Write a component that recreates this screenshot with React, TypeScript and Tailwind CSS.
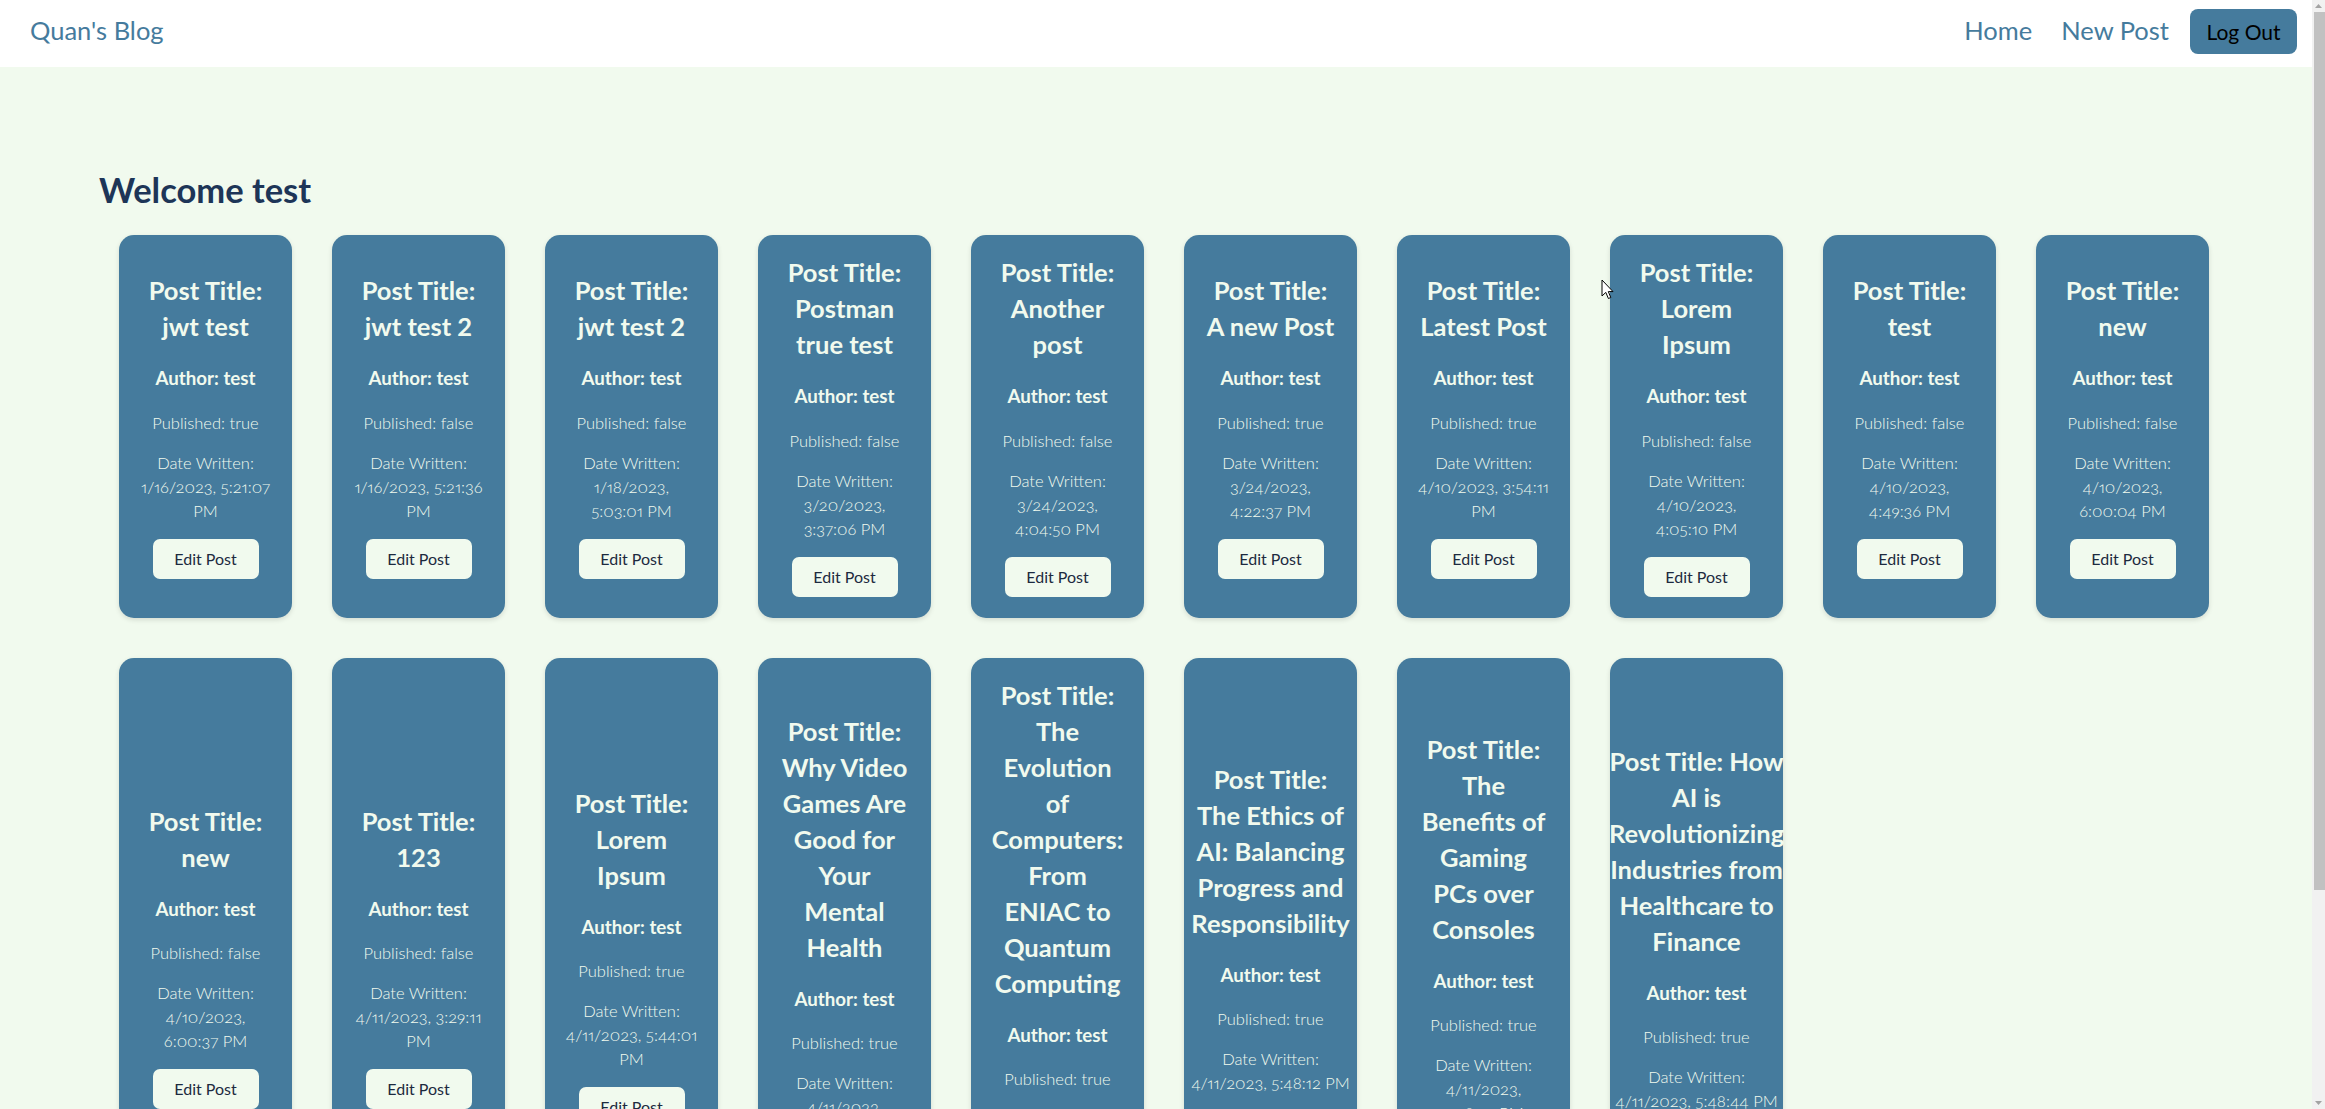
import React from "react";

type Post = { title: string; published: boolean; date: string[] };

const posts: Post[] = [
  { title: "jwt test", published: true, date: ["1/16/2023, 5:21:07", "PM"] },
  { title: "jwt test 2", published: false, date: ["1/16/2023, 5:21:36", "PM"] },
  { title: "jwt test 2", published: false, date: ["1/18/2023,", "5:03:01 PM"] },
  { title: "Postman true test", published: false, date: ["3/20/2023,", "3:37:06 PM"] },
  { title: "Another post", published: false, date: ["3/24/2023,", "4:04:50 PM"] },
  { title: "A new Post", published: true, date: ["3/24/2023,", "4:22:37 PM"] },
  { title: "Latest Post", published: true, date: ["4/10/2023, 3:54:11", "PM"] },
  { title: "Lorem Ipsum", published: false, date: ["4/10/2023,", "4:05:10 PM"] },
  { title: "test", published: false, date: ["4/10/2023,", "4:49:36 PM"] },
  { title: "new", published: false, date: ["4/10/2023,", "6:00:04 PM"] },
  { title: "new", published: false, date: ["4/10/2023,", "6:00:37 PM"] },
  { title: "123", published: false, date: ["4/11/2023, 3:29:11", "PM"] },
  { title: "Lorem Ipsum", published: true, date: ["4/11/2023, 5:44:01", "PM"] },
  { title: "Why Video Games Are Good for Your Mental Health", published: true, date: ["4/11/2023,", "5:46:21 PM"] },
  { title: "The Evolution of Computers: From ENIAC to Quantum Computing", published: true, date: ["4/11/2023,", "5:47:33 PM"] },
  { title: "The Ethics of AI: Balancing Progress and Responsibility", published: true, date: ["4/11/2023, 5:48:12 PM"] },
  { title: "The Benefits of Gaming PCs over Consoles", published: true, date: ["4/11/2023,", "5:48:27 PM"] },
  { title: "How AI is Revolutionizing Industries from Healthcare to Finance", published: true, date: ["4/11/2023, 5:48:44 PM"] },
];

function Card({ post }: { post: Post }) {
  return (
    <div className="w-[173px] rounded-[15px] bg-[#457b9d] text-[#f1faee] flex flex-col items-center justify-center px-[20px] pt-[19px] pb-[21px] shadow-[0_2px_5px_rgba(0,0,0,0.12)]">
      <div className="text-center flex flex-col items-center">
        <h2 className="text-[25.5px] leading-[36px] font-bold">Post Title: {post.title}</h2>
        <h3 className="mt-[20px] text-[18.72px] leading-[28px] font-bold whitespace-nowrap">Author: test</h3>
        <p className="mt-[18.7px] text-[16.5px] leading-[24px] font-light whitespace-nowrap">
          Published: {post.published ? "true" : "false"}
        </p>
        <p className="mt-[16px] text-[16.5px] leading-[24px] font-light oldstyle-nums proportional-nums">
          <span className="block whitespace-nowrap">Date Written:</span>
          {post.date.map((l, i) => (
            <span key={i} className="block whitespace-nowrap">
              {l}
            </span>
          ))}
        </p>
        <button className="mt-[16px] w-[106px] h-[40px] rounded-[7px] bg-[#f1faee] text-[#1d2a3f] text-[16px] leading-[24px]">
          Edit Post
        </button>
      </div>
    </div>
  );
}

function Scrollbar() {
  return (
    <div className="w-[13px] h-full bg-[#f1f1f1] flex flex-col items-stretch shrink-0">
      <div className="h-[12px] flex items-center justify-center">
        <svg width="7" height="4" viewBox="0 0 7 4">
          <path d="M0 4 L3.5 0 L7 4 Z" fill="#a3a3a3" />
        </svg>
      </div>
      <div className="ml-[2px] h-[878px] bg-[#c1c1c1]" />
      <div className="flex-1" />
      <div className="h-[12px] flex items-center justify-center">
        <svg width="7" height="4" viewBox="0 0 7 4">
          <path d="M0 0 L3.5 4 L7 0 Z" fill="#a3a3a3" />
        </svg>
      </div>
    </div>
  );
}

export default function App() {
  return (
    <div className="relative h-screen flex overflow-hidden bg-[#f1faee] font-['Lato',sans-serif]">
      <div className="flex-1 min-w-0 overflow-hidden">
        <nav className="h-[67px] bg-white flex items-center justify-between pl-[30px] pr-[15px] pb-[4px]">
          <a className="text-[25.5px] text-[#457b9d] leading-none pb-[1px]">Quan's Blog</a>
          <div className="flex items-center">
            <a className="text-[25.5px] text-[#457b9d] leading-none pb-[1px]">Home</a>
            <a className="ml-[29px] text-[25.5px] text-[#457b9d] leading-none pb-[1px]">New Post</a>
            <button className="ml-[21px] w-[107px] h-[45px] rounded-[8px] bg-[#457b9d] text-black text-[21px]">
              Log Out
            </button>
          </div>
        </nav>
        <main className="pl-[99px] pr-[60px] pt-[99px] pb-[40px]">
          <h1 className="text-[34.5px] leading-[48px] font-bold text-[#1d3557]">Welcome test</h1>
          <div className="mt-[21px] pl-[20px] flex flex-wrap gap-[40px]">
            {posts.map((p, i) => (
              <Card key={i} post={p} />
            ))}
          </div>
        </main>
      </div>
      <Scrollbar />
      <svg className="absolute left-[1601px] top-[279px]" width="13" height="21" viewBox="0 0 13 21">
        <path d="M1 1 L1 17 L4.8 13.4 L7.4 19.5 L9.8 18.5 L7.3 12.6 L12 12.6 Z" fill="#fff" stroke="#000" strokeWidth="1" strokeLinejoin="round" />
      </svg>
    </div>
  );
}
